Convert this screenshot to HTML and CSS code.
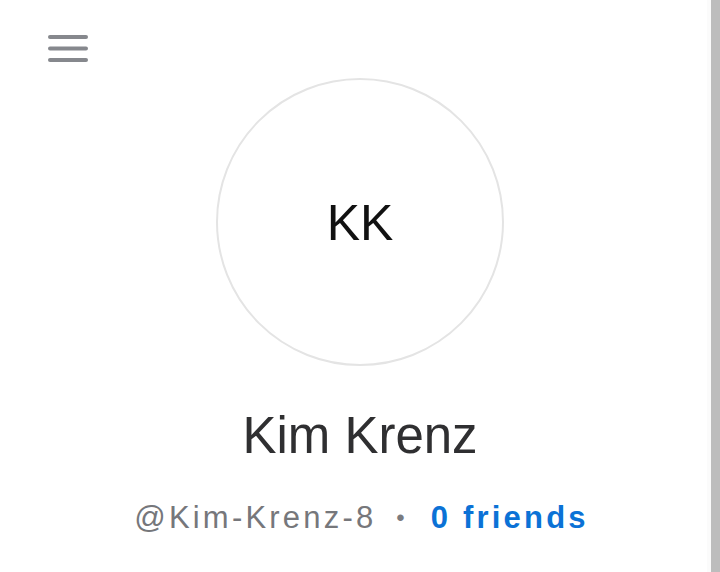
FILE: index.html
```html
<!DOCTYPE html>
<html lang="en">
<head>
<meta charset="utf-8">
<title>Kim Krenz</title>
<link rel="stylesheet" href="styles.css">
</head>
<body>
<div class="page">
  <header class="topbar">
    <button class="menu-btn" aria-label="Menu">
      <svg width="40" height="27" viewBox="0 0 40 27" aria-hidden="true">
        <line x1="2" y1="2" x2="38" y2="2" />
        <line x1="2" y1="13.5" x2="38" y2="13.5" />
        <line x1="2" y1="25" x2="38" y2="25" />
      </svg>
    </button>
  </header>
  <main class="profile">
    <div class="avatar"><span class="initials">KK</span></div>
    <h1 class="name">Kim Krenz</h1>
    <p class="meta">
      <span class="handle">@Kim-Krenz-8</span>
      <span class="dot">•</span>
      <a class="friends" href="#">0 friends</a>
    </p>
  </main>
</div>
<div class="scrollbar"><div class="scroll-thumb"></div></div>
</body>
</html>
```
FILE: styles.css
```css
html, body {
  margin: 0;
  padding: 0;
  background: #ffffff;
  font-family: "Liberation Sans", Arial, sans-serif;
}

.page {
  width: 720px;
  min-height: 572px;
}

.topbar {
  height: 78px;
  box-sizing: border-box;
  padding: 35px 0 0 48px;
}

.menu-btn {
  display: block;
  padding: 0;
  margin: 0;
  border: 0;
  background: none;
  width: 40px;
  height: 27px;
}

.menu-btn svg {
  display: block;
}

.menu-btn line {
  stroke: #86888d;
  stroke-width: 4;
  stroke-linecap: round;
}

.profile {
  display: flex;
  flex-direction: column;
  align-items: center;
}

.avatar {
  width: 288px;
  height: 288px;
  box-sizing: border-box;
  border: 2px solid #e4e4e4;
  border-radius: 50%;
  display: flex;
  align-items: center;
  justify-content: center;
}

.initials {
  font-size: 50px;
  line-height: 1;
  color: #111111;
  margin-top: 2px;
}

.name {
  margin: 40px 0 0;
  font-size: 51px;
  line-height: 60px;
  font-weight: 400;
  color: #2f2f31;
}

.meta {
  margin: 34px 0 0;
  padding-left: 3px;
  font-size: 31px;
  line-height: 36px;
  display: flex;
  align-items: center;
  letter-spacing: 3.2px;
}

.handle {
  color: #76777b;
}

.dot {
  color: #7a7b7f;
  font-size: 24px;
  margin: 0 26px 0 20px;
  letter-spacing: 0;
}

.friends {
  color: #0b72d6;
  font-weight: 700;
  text-decoration: none;
}

.scrollbar {
  position: fixed;
  top: 0;
  right: 0;
  bottom: 0;
  width: 13px;
  background: #fbfbfb;
  display: flex;
  justify-content: flex-end;
}

.scroll-thumb {
  width: 9px;
  background: #bdbdbd;
}
```
